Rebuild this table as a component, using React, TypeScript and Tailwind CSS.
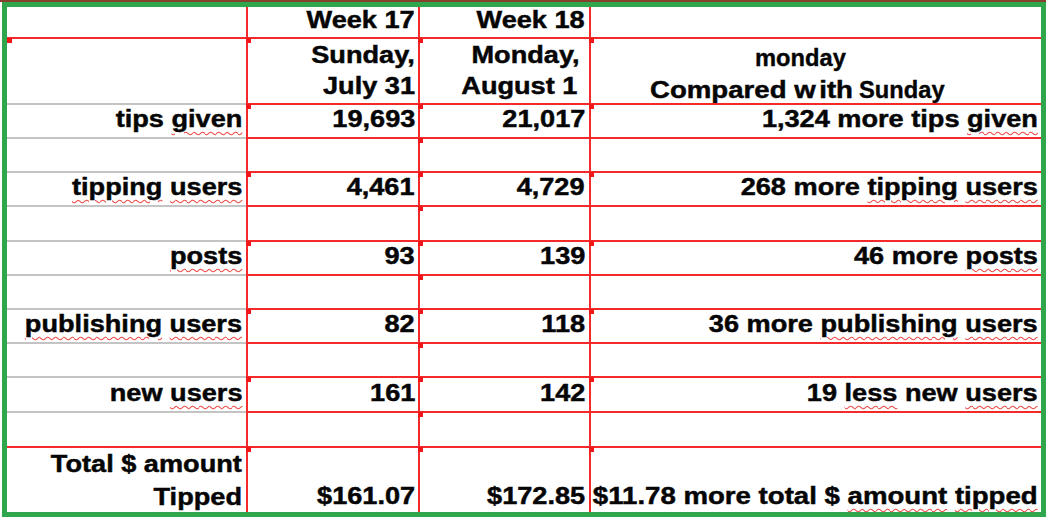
import type { ReactNode } from "react"

const RED = "border-[#f42a2a]"
const GRAY = "border-[#c4c4c4]"

// spell-check squiggle under a word
function Sq({ children }: { children: ReactNode }) {
    return (
        <span className="underline decoration-wavy decoration-[#ec4b47] decoration-1 underline-offset-[4px]">
            {children}
        </span>
    )
}

// the screenshot is stretched sideways, so glyphs get a horizontal scale
function T({ children, className = "scale-x-[1.18]" }: { children: ReactNode; className?: string }) {
    return <span className={`inline-block origin-right whitespace-nowrap ${className}`}>{children}</span>
}

function Marker({ first }: { first?: boolean }) {
    return (
        <span
            className={`absolute top-[-1px] h-[5px] w-[5px] bg-[#f01818] ${first ? "left-0" : "left-[-2px]"}`}
        />
    )
}

type CellProps = {
    col: number
    top?: "red" | "gray" | "none"
    marker?: boolean
    pb?: string
    children?: ReactNode
}

function Cell({ col, top = "red", marker, pb = "pb-[1px]", children }: CellProps) {
    const left = col > 0 ? `border-l-2 ${RED}` : ""
    const t = top === "none" ? "" : `border-t-2 ${top === "red" ? RED : GRAY}`
    const pr = col === 0 ? "pr-[4px]" : col === 2 ? "pr-[4px]" : "pr-[3px]"
    return (
        <div className={`relative flex items-end justify-end ${left} ${t} ${pr} ${pb}`}>
            {marker && <Marker first={col === 0} />}
            {children}
        </div>
    )
}

const rows: { label: ReactNode; a: string; b: string; diff: ReactNode }[] = [
    {
        label: <>tips <Sq>given</Sq></>,
        a: "19,693",
        b: "21,017",
        diff: <>1,324 more tips <Sq>given</Sq></>,
    },
    {
        label: <><Sq>tipping</Sq> <Sq>users</Sq></>,
        a: "4,461",
        b: "4,729",
        diff: <>268 more <Sq>tipping</Sq> <Sq>users</Sq></>,
    },
    {
        label: <Sq>posts</Sq>,
        a: "93",
        b: "139",
        diff: <>46 more <Sq>posts</Sq></>,
    },
    {
        label: <><Sq>publishing</Sq> <Sq>users</Sq></>,
        a: "82",
        b: "118",
        diff: <>36 more <Sq>publishing</Sq> <Sq>users</Sq></>,
    },
    {
        label: <>new <Sq>users</Sq></>,
        a: "161",
        b: "142",
        diff: <>19 <Sq>less</Sq> new <Sq>users</Sq></>,
    },
]

export default function App() {
    return (
        <div className="h-[517px] w-[1046px] overflow-hidden bg-white border-t-2 border-[#86402e] pl-[2px]">
            <div className="h-[515px] w-[1044px] border-[5px] border-[#2fa64c] bg-white font-['Liberation_Sans',Arial,sans-serif] text-[23px] font-bold leading-[31px] text-[#050505] [-webkit-text-stroke:0.45px_#050505]">
                <div className="grid grid-cols-[239px_172px_171px_452px] grid-rows-[30px_66px_34px_34px_34px_35px_34px_34px_34px_34px_35px_35px_66px]">
                    {/* week row */}
                    <Cell col={0} top="none" />
                    <Cell col={1} top="none"><T>Week 17</T></Cell>
                    <Cell col={2} top="none"><T>Week 18</T></Cell>
                    <Cell col={3} top="none" />

                    {/* date header */}
                    <Cell col={0} marker />
                    <Cell col={1} marker>
                        <div className="text-right">
                            <div><T>Sunday,</T></div>
                            <div><T>July 31</T></div>
                        </div>
                    </Cell>
                    <Cell col={2} marker>
                        <div className="text-right">
                            <div className="pr-[5px]"><T>Monday,</T></div>
                            <div className="pr-[8px]"><T>August 1</T></div>
                        </div>
                    </Cell>
                    <div className={`relative flex flex-col justify-end border-l-2 border-t-2 ${RED}`}>
                        <Marker />
                        <div className="mb-[-3px] leading-[32px]">
                            <div className="pl-[164px] [-webkit-text-stroke:0.35px_#000]">
                                <span className="inline-block origin-left scale-x-[1.03]">monday</span>
                            </div>
                            <div className="flex pl-[59px]">
                                <span className="w-[209px] whitespace-nowrap">
                                    <span className="inline-block origin-left scale-x-[1.2]">
                                        Compared w<span className="ml-[3px]">ith</span>
                                    </span>
                                </span>
                                <span className="inline-block origin-left scale-x-[1.03] [-webkit-text-stroke:0.35px_#000]">Sunday</span>
                            </div>
                        </div>
                    </div>

                    {rows.map((r, i) => (
                        <>
                            <Cell key={`l${i}`} col={0} top="gray" pb="pb-[2px]">
                                <T>{r.label}</T>
                            </Cell>
                            <Cell key={`a${i}`} col={1} marker pb="pb-[2px]"><T>{r.a}</T></Cell>
                            <Cell key={`b${i}`} col={2} marker pb="pb-[2px]"><T>{r.b}</T></Cell>
                            <Cell key={`d${i}`} col={3} marker pb="pb-[2px]"><T>{r.diff}</T></Cell>

                            <Cell key={`e0${i}`} col={0} top="gray" />
                            <Cell key={`e1${i}`} col={1} />
                            <Cell key={`e2${i}`} col={2} marker />
                            <Cell key={`e3${i}`} col={3} />
                        </>
                    ))}

                    {/* totals */}
                    <Cell col={0} pb="pb-0">
                        <div className="mb-[-2px] text-right leading-[33px]">
                            <div><T>Total $ amount</T></div>
                            <div><T>Tipped</T></div>
                        </div>
                    </Cell>
                    <Cell col={1} marker pb="pb-0"><T>$161.07</T></Cell>
                    <Cell col={2} marker pb="pb-0"><T>$172.85</T></Cell>
                    <Cell col={3} marker pb="pb-0">
                        <T className="scale-x-[1.2]">$11.78 more total $ <Sq>amount</Sq> <Sq>tipped</Sq></T>
                    </Cell>
                </div>
            </div>
        </div>
    )
}
